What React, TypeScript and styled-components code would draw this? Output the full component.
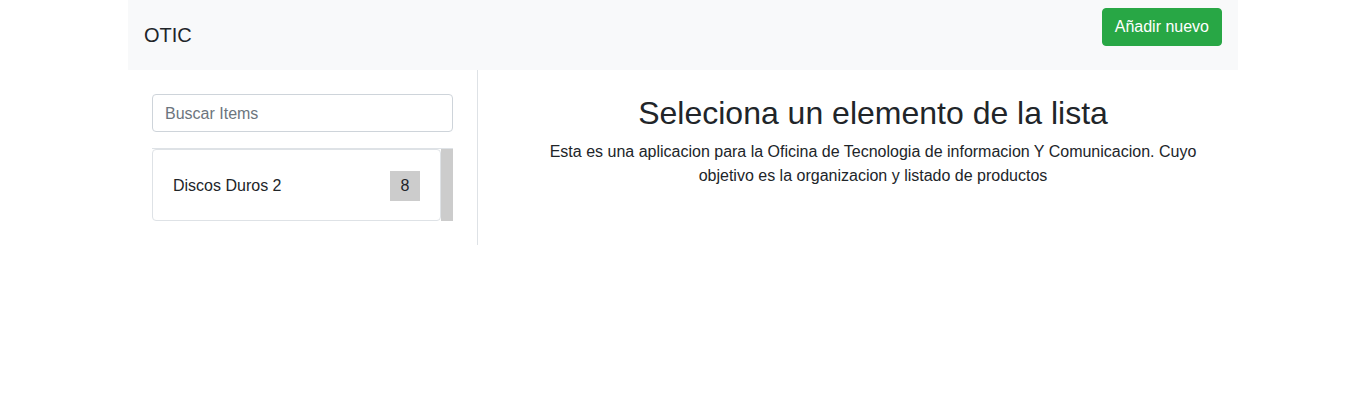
import styled, { createGlobalStyle } from 'styled-components';

const GlobalStyle = createGlobalStyle`
  * { box-sizing: border-box; }
  body {
    margin: 0;
    font-family: "Liberation Sans", Arial, sans-serif;
    font-size: 16px;
    line-height: 1.5;
    color: #212529;
    background: #fff;
  }
`;

const App = () => {
    return (
        <>
            <GlobalStyle />
            <Container>
                <NavBar>
                    <Brand>OTIC</Brand>
                    <AddButton type="button">Añadir nuevo</AddButton>
                </NavBar>
                <Row>
                    <Sidebar>
                        <Search type="text" placeholder="Buscar Items" />
                        <ListWrap>
                            <ItemList>
                                <Item>
                                    <span>Discos Duros 2</span>
                                    <Badge>8</Badge>
                                </Item>
                            </ItemList>
                            <ScrollThumb />
                        </ListWrap>
                    </Sidebar>
                    <Main>
                        <Title>Seleciona un elemento de la lista</Title>
                        <Lead>
                            Esta es una aplicacion para la Oficina de Tecnologia de informacion Y
                            Comunicacion. Cuyo objetivo es la organizacion y listado de productos
                        </Lead>
                    </Main>
                </Row>
            </Container>
        </>
    )
}

const Container = styled.div`
    width: 1110px;
    margin: 0 auto;
`

const NavBar = styled.nav`
    display: flex;
    justify-content: space-between;
    align-items: center;
    height: 70px;
    padding: 0 16px;
    background-color: #f8f9fa;
`

const Brand = styled.span`
    font-size: 20px;
    line-height: 30px;
`

const AddButton = styled.button`
    align-self: flex-start;
    margin-top: 8px;
    height: 38px;
    padding: 6px 12px;
    font-family: inherit;
    font-size: 16px;
    line-height: 24px;
    color: #fff;
    background-color: #28a745;
    border: 1px solid #28a745;
    border-radius: 4px;
`

const Row = styled.div`
    display: flex;
`

const Sidebar = styled.div`
    width: 350px;
    padding: 24px;
    border-right: 1px solid #dee2e6;
`

const Search = styled.input`
    display: block;
    width: 100%;
    height: 38px;
    padding: 7px 12px 5px;
    font-family: inherit;
    font-size: 16px;
    color: #495057;
    border: 1px solid #ced4da;
    border-radius: 4px;
    outline: none;

    &::placeholder {
        color: #6c757d;
    }
`

const ListWrap = styled.div`
    display: flex;
    margin-top: 16px;
    border-top: 1px solid #dee2e6;
`

const ItemList = styled.div`
    flex: 1;
`

const Item = styled.div`
    display: flex;
    justify-content: space-between;
    align-items: center;
    padding: 21px 20px 19px;
    border: 1px solid #dee2e6;
    border-radius: 4px;
`

const Badge = styled.span`
    width: 30px;
    height: 30px;
    line-height: 30px;
    text-align: center;
    background-color: #ccc;
`

const ScrollThumb = styled.div`
    width: 12px;
    background-color: #ccc;
`

const Main = styled.div`
    flex: 1;
    padding: 24px 29px 24px 59px;
    text-align: center;
`

const Title = styled.h2`
    margin: 0 0 8px;
    font-size: 32px;
    font-weight: 500;
    line-height: 1.2;
`

const Lead = styled.p`
    margin: 0;
`

export default App;
